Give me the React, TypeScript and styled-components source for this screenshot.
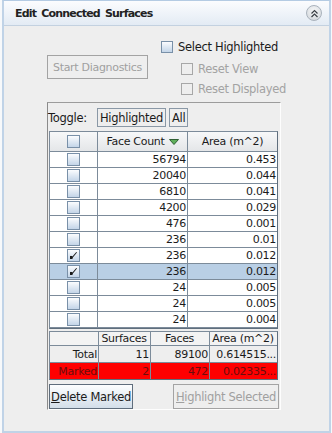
import { Fragment } from "react";
import styled, { createGlobalStyle } from "styled-components";

const GlobalStyle = createGlobalStyle`
  html, body {
    margin: 0;
    padding: 0;
    background: #f7f9fb;
  }
  * {
    box-sizing: border-box;
  }
`;

const font = `"DejaVu Sans", "Liberation Sans", sans-serif`;

const Frame = styled.div`
  margin-left: 2px;
  width: 329px;
  height: 433px;
  display: flex;
  flex-direction: column;
  border: 2px solid #c0d3e7;
  border-top: 1px solid #b4cbe3;
  background: #eeeeee;
  font-family: ${font};
  font-size: 11px;
  letter-spacing: -0.3px;
  color: #1b1b1b;
`;

const Header = styled.div`
  height: 25px;
  flex-shrink: 0;
  display: flex;
  align-items: center;
  justify-content: space-between;
  padding: 0 7px 0 11px;
  background: linear-gradient(#fbfcfe, #e3ebf4);
  border-bottom: 1px solid #c3d1e0;
`;

const Title = styled.span`
  font-weight: bold;
  font-size: 11px;
  letter-spacing: -0.8px;
  word-spacing: 2px;
  color: #222;
`;

const CollapseButton = styled.div`
  width: 16px;
  height: 16px;
  border-radius: 50%;
  border: 1px solid #a9b2bc;
  background: radial-gradient(circle at 50% 35%, #f6f7f8, #cfd4d9);
  display: flex;
  align-items: center;
  justify-content: center;
`;

const Body = styled.div`
  flex: 1;
  display: flex;
  flex-direction: column;
  padding-left: 43px;
`;

const TopArea = styled.div`
  height: 76px;
  display: flex;
`;

const PlainButton = styled.div<{ $disabled?: boolean }>`
  height: 24px;
  padding: 0 5px;
  display: flex;
  align-items: center;
  justify-content: center;
  border: 1px solid ${(p) => (p.$disabled ? "#a3a3a3" : "#5f6d7c")};
  background: ${(p) =>
    p.$disabled ? "#eeeeee" : "linear-gradient(#fdfeff, #d3dee9)"};
  color: ${(p) => (p.$disabled ? "#a0a0a0" : "#1b1b1b")};
  white-space: nowrap;
`;

const DiagButton = styled(PlainButton)`
  margin-top: 29px;
  width: 101px;
`;

const Options = styled.div`
  margin-left: 13px;
  padding-top: 11px;
  display: flex;
  flex-direction: column;
`;

const CheckRow = styled.div<{ $indent?: boolean; $disabled?: boolean; $first?: boolean }>`
  height: 20px;
  margin-top: ${(p) => (p.$first ? "0" : "2px")};
  margin-bottom: ${(p) => (p.$first ? "0" : "-2px")};
  padding-left: ${(p) => (p.$indent ? "20px" : "0")};
  display: flex;
  align-items: center;
  gap: 5px;
  color: ${(p) => (p.$disabled ? "#a3a3a3" : "#1b1b1b")};
  font-size: 11.5px;
`;

const Box = styled.div<{ $disabled?: boolean; $size?: number }>`
  width: ${(p) => p.$size ?? 12}px;
  height: ${(p) => p.$size ?? 12}px;
  flex-shrink: 0;
  border: 1px solid ${(p) => (p.$disabled ? "#a7a7a7" : "#7990a8")};
  background: ${(p) =>
    p.$disabled ? "#eeeeee" : "linear-gradient(#fbfcfe, #c3d5e8)"};
  display: flex;
  align-items: center;
  justify-content: center;
`;

const TablePanel = styled.div`
  width: 234px;
  height: 308px;
  display: flex;
  flex-direction: column;
  border-top: 1px solid #9c9c9c;
  border-left: 1px solid #8a8a8a;
  border-right: 1px solid #fdfdfd;
  border-bottom: 1px solid #fdfdfd;
  background: #eeeeee;
`;

const ToggleBar = styled.div`
  height: 27px;
  display: flex;
  align-items: center;
  padding: 2px 0 0 0;
  gap: 3px;
`;

const ToggleLabel = styled.span`
  width: 46px;
  font-size: 11.5px;
`;

const SmallButton = styled.div`
  height: 19px;
  padding: 0 2px;
  display: flex;
  align-items: center;
  border: 1px solid #8a98a6;
  background: #eeeeee;
  font-size: 11.5px;
`;

const Grid = styled.div<{ $cols: string; $gap?: number }>`
  margin-left: 1px;
  margin-top: ${(p) => p.$gap ?? 1}px;
  width: 229px;
  display: grid;
  grid-template-columns: ${(p) => p.$cols};
  border-top: 1px solid #7c8b9a;
  border-left: 1px solid #7c8b9a;
  border-right: 1px solid #5f6e7d;
  border-bottom: 1px solid #5f6e7d;
  background: #ffffff;
`;

const HeadCell = styled.div`
  height: 20px;
  display: flex;
  align-items: center;
  justify-content: center;
  gap: 4px;
  border-right: 1px solid #7c8b9a;
  border-bottom: 1px solid #7c8b9a;
  background: linear-gradient(#f7f8f9, #e4e6e8);
  &:nth-child(3) {
    border-right: none;
  }
`;

const Cell = styled.div<{ $selected?: boolean; $center?: boolean; $last?: boolean }>`
  height: 16px;
  display: flex;
  align-items: center;
  justify-content: ${(p) => (p.$center ? "center" : "flex-end")};
  padding-right: 1px;
  border-right: ${(p) => (p.$last ? "none" : "1px solid #7c8b9a")};
  border-bottom: 1px solid #7c8b9a;
  background: ${(p) => (p.$selected ? "#b9cfe5" : "#ffffff")};
`;

const SumCell = styled.div<{ $tone: "head" | "total" | "marked"; $last?: boolean; $center?: boolean }>`
  height: ${(p) => (p.$tone === "head" ? 14 : p.$tone === "total" ? 17 : 16)}px;
  display: flex;
  align-items: center;
  justify-content: ${(p) => (p.$center ? "center" : "flex-end")};
  padding-right: 1px;
  border-right: ${(p) => (p.$last ? "none" : "1px solid #7c8b9a")};
  border-bottom: ${(p) => (p.$tone === "marked" ? "none" : "1px solid #7c8b9a")};
  background: ${(p) =>
    p.$tone === "marked" ? "#ff0000" : p.$tone === "head" ? "#f3f3f3" : "#eeeeee"};
  color: ${(p) => (p.$tone === "marked" ? "#6a0d0d" : "#1b1b1b")};
  overflow: hidden;
  white-space: nowrap;
`;

const ButtonRow = styled.div`
  margin-top: 4px;
  padding: 0 1px 0 1px;
  display: flex;
  justify-content: space-between;
`;

const ActionButton = styled(PlainButton)<{ $w: number }>`
  width: ${(p) => p.$w}px;
  height: 25px;
  font-size: 11.5px;
`;

const Check = () => (
  <svg width="9" height="9" viewBox="0 0 9 9">
    <path d="M1 5.5 L3 7.5 L8 1.5 L7.3 1 L3 6 L2 4.8 Z" fill="#1a1a1a" />
    <rect x="1" y="5" width="2.5" height="3" fill="#1a1a1a" />
  </svg>
);

const SortArrow = () => (
  <svg width="10" height="6" viewBox="0 0 10 6">
    <path d="M0.5 0.5 L9.5 0.5 L5 5.5 Z" fill="#5fb05a" stroke="#2f5f33" strokeWidth="1" />
  </svg>
);

const rows = [
  { faces: 56794, area: "0.453" },
  { faces: 20040, area: "0.044" },
  { faces: 6810, area: "0.041" },
  { faces: 4200, area: "0.029" },
  { faces: 476, area: "0.001" },
  { faces: 236, area: "0.01" },
  { faces: 236, area: "0.012", checked: true },
  { faces: 236, area: "0.012", checked: true, selected: true },
  { faces: 24, area: "0.005" },
  { faces: 24, area: "0.005" },
  { faces: 24, area: "0.004" },
];

export default function App() {
  return (
    <>
      <GlobalStyle />
      <Frame>
        <Header>
          <Title>Edit Connected Surfaces</Title>
          <CollapseButton>
            <svg width="9" height="9" viewBox="0 0 9 9">
              <path d="M1.5 4.5 L4.5 1.5 L7.5 4.5 M1.5 8 L4.5 5 L7.5 8" fill="none" stroke="#3a3f45" strokeWidth="1.2" />
            </svg>
          </CollapseButton>
        </Header>
        <Body>
          <TopArea>
            <DiagButton $disabled>Start Diagnostics</DiagButton>
            <Options>
              <CheckRow $first>
                <Box />
                Select Highlighted
              </CheckRow>
              <CheckRow $indent $disabled>
                <Box $disabled />
                Reset View
              </CheckRow>
              <CheckRow $indent $disabled>
                <Box $disabled />
                Reset Displayed
              </CheckRow>
            </Options>
          </TopArea>
          <TablePanel>
            <ToggleBar>
              <ToggleLabel>Toggle:</ToggleLabel>
              <SmallButton>Highlighted</SmallButton>
              <SmallButton>All</SmallButton>
            </ToggleBar>
            <Grid $cols="48px 90px 89px">
              <HeadCell>
                <Box $size={13} />
              </HeadCell>
              <HeadCell>
                Face Count <SortArrow />
              </HeadCell>
              <HeadCell>Area (m^2)</HeadCell>
              {rows.map((r, i) => (
                <Fragment key={i}>
                  <Cell $center $selected={r.selected}>
                    <Box $size={13}>{r.checked && <Check />}</Box>
                  </Cell>
                  <Cell $selected={r.selected}>{r.faces}</Cell>
                  <Cell $selected={r.selected} $last>
                    {r.area}
                  </Cell>
                </Fragment>
              ))}
            </Grid>
            <Grid $cols="49px 52px 59px 67px" $gap={2}>
              <SumCell $tone="head" />
              <SumCell $tone="head" $center>Surfaces</SumCell>
              <SumCell $tone="head" $center>Faces</SumCell>
              <SumCell $tone="head" $center $last>Area (m^2)</SumCell>
              <SumCell $tone="total">Total</SumCell>
              <SumCell $tone="total">11</SumCell>
              <SumCell $tone="total">89100</SumCell>
              <SumCell $tone="total" $last>0.614515...</SumCell>
              <SumCell $tone="marked">Marked</SumCell>
              <SumCell $tone="marked">2</SumCell>
              <SumCell $tone="marked">472</SumCell>
              <SumCell $tone="marked" $last>0.02335...</SumCell>
            </Grid>
            <ButtonRow>
              <ActionButton $w={84}>
                <span>
                  <u>D</u>elete Marked
                </span>
              </ActionButton>
              <ActionButton $w={106} $disabled>
                <span>
                  <u>H</u>ighlight Selected
                </span>
              </ActionButton>
            </ButtonRow>
          </TablePanel>
        </Body>
      </Frame>
    </>
  );
}
